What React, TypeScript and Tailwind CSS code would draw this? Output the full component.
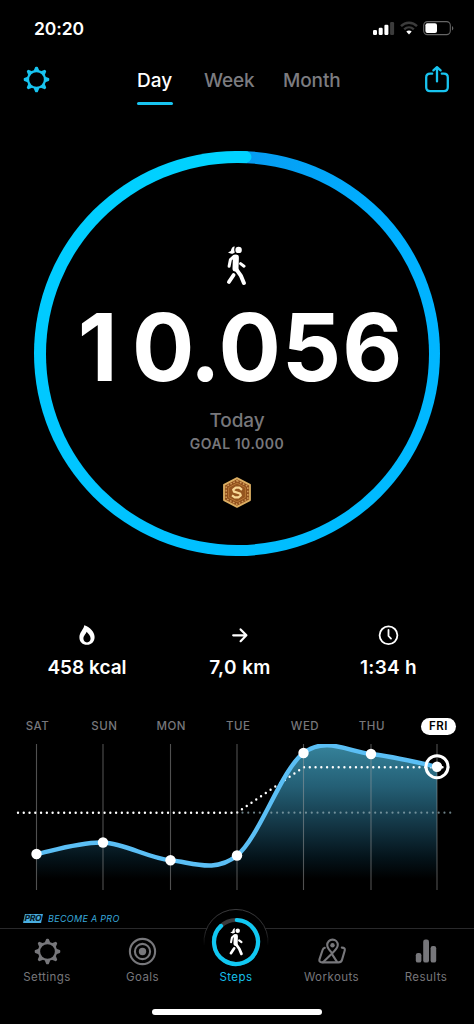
import React from "react";

const TEETH = [0, 45, 90, 135, 180, 225, 270, 315];

function Gear({ className }: { className: string }) {
  return (
    <svg viewBox="-13 -13 26 26" className={className} fill="none">
      <circle r="8.2" stroke="currentColor" strokeWidth="2.2" />
      {TEETH.map((a) => (
        <path
          key={a}
          d="M-1.6 -8.8L-0.5 -11.4H0.5L1.6 -8.8Z"
          transform={`rotate(${a})`}
          fill="currentColor"
          stroke="currentColor"
          strokeWidth="1.8"
          strokeLinejoin="round"
        />
      ))}
    </svg>
  );
}

function Walker({ className }: { className: string }) {
  return (
    <svg viewBox="0 0 20 40" className={className} fill="none" stroke="white" strokeLinecap="round" strokeLinejoin="round">
      <circle cx="12.6" cy="3.9" r="3.2" fill="white" stroke="none" />
      <path d="M8.8 0.4C6.4 0.3 5.4 2.2 4.8 5L2 6.6C4.6 8.2 7.8 8 8.8 6.2C8.1 4.4 8 2.3 8.8 0.4Z" fill="white" stroke="none" />
      <path d="M9.9 11.6L9.5 22.6" strokeWidth="6" />
      <path d="M8 10.4L4.4 13.6L3.1 20.2" strokeWidth="3" />
      <path d="M14.6 17.6L18 20.2" strokeWidth="3" />
      <path d="M10.2 23.2L14.8 29.6L17.9 37" strokeWidth="4" />
      <path d="M7.6 29L2.9 36" strokeWidth="3.8" />
    </svg>
  );
}

function StatusBar() {
  return (
    <div className="flex h-14 items-center justify-between pl-[34px] pr-[19px]">
      <span className="mt-[2px] text-[17.5px] font-semibold leading-none tracking-[-0.1px] text-white">20:20</span>
      <svg width="82" height="16" viewBox="0 0 82 16" fill="none">
        <rect x="0" y="10" width="4" height="5" rx="1.2" fill="white" />
        <rect x="5.7" y="7.7" width="4" height="7.3" rx="1.2" fill="white" />
        <rect x="11.4" y="4.7" width="4" height="10.3" rx="1.2" fill="white" />
        <rect x="17.1" y="2" width="4" height="13" rx="1.2" fill="#3c3c3c" />
        <path d="M28 6.2C32.4 1.6 39.6 1.6 44 6.2" stroke="#3c3c3c" strokeWidth="2.4" />
        <path d="M31.2 9.4C34 6.7 38 6.7 40.8 9.4" stroke="#3c3c3c" strokeWidth="2.3" />
        <path d="M33.3 11.6C34.8 10.2 37.2 10.2 38.7 11.6L36 14.6Z" fill="white" />
        <rect x="50.7" y="1.6" width="26.6" height="13" rx="3.8" stroke="#666" strokeWidth="1.1" />
        <rect x="52.4" y="3.2" width="11.6" height="9.8" rx="2" fill="white" />
        <path d="M79 6V10.4C80.8 9.6 80.8 6.8 79 6Z" fill="#666" />
      </svg>
    </div>
  );
}

function Header() {
  return (
    <header className="flex h-[52px] items-start pl-[23px] pr-[24px] text-[19px] font-medium leading-6">
      <Gear className="mt-[10px] h-[27px] w-[27px] text-[#18c4f0]" />
      <nav className="ml-[87px] flex grow pt-[13px] text-[#7c7c80]">
        <div className="flex w-[67px] flex-col text-white">
          <span>Day</span>
          <span className="mt-[9px] h-[3px] w-[36px] rounded-full bg-[#18c4f0]" />
        </div>
        <span className="w-[79px] tracking-[-0.1px]">Week</span>
        <span className="tracking-[-0.1px]">Month</span>
      </nav>
      <svg width="26" height="29" viewBox="0 0 26 29" className="mt-[9px]" fill="none" stroke="#18c4f0" strokeWidth="2.3" strokeLinecap="round" strokeLinejoin="round">
        <path d="M8.2 8.7H6.2C3.6 8.7 2.2 10.2 2.2 12.6V22.2C2.2 24.8 3.6 26.1 6.2 26.1H19.8C22.4 26.1 23.8 24.8 23.8 22.2V12.6C23.8 10.2 22.4 8.7 19.8 8.7H17.8" />
        <path d="M13 16.4V2.6M9.4 5.4L13 2.2L16.6 5.4" />
      </svg>
    </header>
  );
}

function Medal() {
  return (
    <svg width="30" height="33" viewBox="-15 -16.5 30 33" fill="none">
      <path d="M0 -14.4L13 -7.6V7.6L0 14.4L-13 7.6V-7.6Z" fill="#8f4f1c" stroke="#dcae62" strokeWidth="1.8" strokeLinejoin="round" />
      <path d="M0 -11.8L10.8 -6.2V6.2L0 11.8L-10.8 6.2V-6.2Z" stroke="#d09a5a" strokeWidth="1.5" strokeDasharray="1.7 1.6" strokeLinejoin="round" />
      <path d="M0 -9.4L8.4 -4.9V4.9L0 9.4L-8.4 4.9V-4.9Z" fill="#94541f" stroke="#b97a38" strokeWidth="0.9" strokeLinejoin="round" />
      <path d="M5 -2.6L2.4 -4.8H-1.2L-3.8 -2.9L-3 -0.9L3 1L3.8 3L1.4 4.9H-2.2L-5 2.8" stroke="#f8d795" strokeWidth="2.2" strokeLinejoin="round" />
    </svg>
  );
}

function Ring() {
  return (
    <section className="relative ml-[34px] mt-[43px] h-[405px] w-[406px] shrink-0 rounded-full bg-[conic-gradient(from_3deg,#069cf2_0deg,#00aeff_40deg,#00b6ff_90deg,#00bfff_180deg,#00caff_270deg,#00d3ff_357deg)] p-[11.5px]">
      <div className="flex h-full w-full flex-col items-center rounded-full bg-black">
        <Walker className="mr-[2px] mt-[83px] h-[40px] w-[20px]" />
        <div className="ml-[7px] mt-[17px] flex h-[90px] scale-x-[0.99] items-center whitespace-nowrap text-[93.5px] font-bold leading-none text-white">
          <span className="tracking-[14.5px]">1</span>
          <span className="tracking-[-2px]">0.</span>
          <span className="tracking-[1px]">056</span>
        </div>
        <div className="mt-[16px] text-[19px] font-medium leading-6 tracking-[-0.1px] text-[#77777b]">Today</div>
        <div className="mt-[1.5px] text-[14px] font-semibold leading-5 tracking-[0.5px] text-[#77777b]">GOAL 10.000</div>
        <div className="mt-[21.5px]">
          <Medal />
        </div>
      </div>
      <svg className="absolute left-0 top-0" width="406" height="14" viewBox="0 0 406 14">
        <path d="M202 5.8H203Q208 5.8 211.8 6" stroke="#00d2ff" strokeWidth="11.4" strokeLinecap="round" fill="none" />
      </svg>
    </section>
  );
}

function Stats() {
  return (
    <section className="mt-[67px] flex h-[63px] pl-[10px] pr-[10px] text-[19px] font-semibold leading-6 text-white">
      <div className="flex w-[154px] flex-col items-center">
        <svg width="18" height="22" viewBox="0 0 18 22" className="mt-[1px]">
          <path fillRule="evenodd" fill="white" d="M7 1.4C11.8 3 16.6 7.6 16.6 13C16.6 17.8 13.4 20.8 9 20.8C4.5 20.8 1.4 17.8 1.4 13.2C1.4 8.6 5.4 5.6 6.2 1.8C6.3 1.4 6.6 1.3 7 1.4ZM8.6 7.8C8.2 10 5.4 11.6 5.4 14.6C5.4 17 6.8 18.4 9 18.4C11.2 18.4 12.6 17 12.6 14.6C12.6 11.8 10.2 9.6 8.6 7.8Z" />
        </svg>
        <span className="mt-[10px]">458 kcal</span>
      </div>
      <div className="flex w-[152px] flex-col items-center">
        <svg width="18" height="22" viewBox="0 0 18 22" className="mt-[1px]" fill="none" stroke="white" strokeWidth="2.2" strokeLinecap="round" strokeLinejoin="round">
          <path d="M2.2 11.3H15.2M9.6 5.4L15.4 11.3L9.6 17.2" />
        </svg>
        <span className="mt-[10px] tracking-[0.4px]">7,0 km</span>
      </div>
      <div className="flex w-[145px] flex-col items-center">
        <svg width="22" height="22" viewBox="0 0 22 22" className="mt-[1px]" fill="none" stroke="white" strokeWidth="1.8" strokeLinecap="round" strokeLinejoin="round">
          <circle cx="10.5" cy="11.3" r="8.9" />
          <path d="M10.5 6V12L13 14.6" />
        </svg>
        <span className="mt-[10px] tracking-[0.3px]">1:34 h</span>
      </div>
    </section>
  );
}

const POINTS: [number, number][] = [
  [36.5, 114],
  [103, 102.5],
  [170.5, 120.3],
  [237, 115.5],
  [303.5, 13],
  [371, 14],
  [437, 26.7],
];

const curve = POINTS.slice(1).reduce((d, p, i) => {
  const a = POINTS[i];
  const before = POINTS[i - 1] ?? a;
  const after = POINTS[i + 2] ?? p;
  return `${d}C${a[0] + (p[0] - before[0]) / 6} ${a[1] + (p[1] - before[1]) / 6} ${p[0] - (after[0] - a[0]) / 6} ${p[1] - (after[1] - a[1]) / 6} ${p[0]} ${p[1]}`;
}, `M${POINTS[0][0]} ${POINTS[0][1]}`);

function Chart() {
  return (
    <section className="mt-[29px]">
      <div className="flex h-[22px] items-center pl-[4px] text-[11.5px] font-medium leading-none tracking-[0.5px] text-[#77777b]">
        {["SAT", "SUN", "MON", "TUE", "WED", "THU"].map((d) => (
          <span key={d} className="mt-[2px] w-[66.9px] text-center">
            {d}
          </span>
        ))}
        <span className="ml-[15.6px] flex h-[17px] w-[35px] items-center justify-center rounded-full bg-white pt-[2px] font-semibold tracking-[0.5px] text-black">FRI</span>
      </div>
      <svg width="474" height="155" viewBox="0 0 474 155" fill="none" className="mt-[3px] block">
        <defs>
          <linearGradient id="area" x1="0" y1="4" x2="0" y2="146" gradientUnits="userSpaceOnUse">
            <stop offset="0" stopColor="#36839b" />
            <stop offset="0.3" stopColor="#245f75" />
            <stop offset="0.6" stopColor="#11313f" />
            <stop offset="0.8" stopColor="#04131a" />
            <stop offset="0.95" stopColor="#000000" />
          </linearGradient>
          <clipPath id="plot">
            <rect x="0" y="4" width="474" height="151" />
          </clipPath>
        </defs>
        <g clipPath="url(#plot)">
          <path d={`${curve}V150H36.5Z`} fill="url(#area)" />
          <path d="M18 72.7H237L303.5 27.3H453" stroke="white" strokeWidth="2.4" strokeLinecap="round" strokeDasharray="0 5.77" />
          <path d="M242.5 72.7H455" stroke="#8fa9b2" strokeOpacity="0.75" strokeWidth="2.2" strokeLinecap="round" strokeDasharray="0 5.77" />
          <path d={curve} stroke="#5bbff5" strokeWidth="4.4" />
          {POINTS.map(([x]) => (
            <path key={x} d={`M${x} 4V150`} stroke="#a0a0a0" strokeOpacity="0.5" strokeWidth="1.1" />
          ))}
        </g>
        {POINTS.map(([x, y]) => (
          <circle key={x} cx={x} cy={y} r="5.2" fill="white" />
        ))}
        <circle cx="437" cy="26.7" r="11" stroke="white" strokeWidth="3" />
      </svg>
    </section>
  );
}

function StepsBadge() {
  return (
    <svg width="68" height="68" viewBox="-34 -34 68 68" className="absolute left-0 top-[-21px]" fill="none">
      <defs>
        <linearGradient id="rim" x1="0" y1="-32" x2="0" y2="4" gradientUnits="userSpaceOnUse">
          <stop offset="0" stopColor="#3a3a3c" />
          <stop offset="0.6" stopColor="#2c2c2e" />
          <stop offset="1" stopColor="#000000" />
        </linearGradient>
      </defs>
      <circle r="32" fill="black" />
      <path d="M-31.8 3A32 32 0 1 1 31.8 3" stroke="url(#rim)" strokeWidth="1" />
      <circle r="22" stroke="#3a3a3c" strokeWidth="4.2" />
      <path d="M0.8 -22A22 22 0 1 1 -15 -16.1" stroke="#10c8f2" strokeWidth="4.2" strokeLinecap="round" />
      <g transform="translate(-7.6 -14)">
        <Walker className="h-[28px] w-[15px]" />
      </g>
    </svg>
  );
}

function TabBar() {
  return (
    <footer>
      <div className="flex h-[19px] items-center gap-[5px] pl-[24px] text-[#38a9dc]">
        <span className="flex h-[9px] w-[18px] -skew-x-12 items-center justify-center bg-[#4aaee0] text-[8.5px] font-extrabold leading-none tracking-[-0.3px] text-[#06202c]">PRO</span>
        <span className="ml-[1px] text-[9px] italic leading-none tracking-[0.3px]">BECOME A PRO</span>
      </div>
      <div className="flex h-[60px] border-t border-[#29292b] text-[11.5px] leading-none tracking-[0.45px] text-[#77777b]">
        <div className="flex w-[94px] flex-col items-center pt-[9px]">
          <Gear className="h-[27px] w-[27px]" />
          <span className="mt-[7px]">Settings</span>
        </div>
        <div className="flex w-[97px] flex-col items-center pt-[8px]">
          <svg width="29" height="29" viewBox="-14.5 -14.5 29 29" fill="none" stroke="currentColor">
            <circle r="12.6" strokeWidth="2.1" />
            <circle r="7.6" strokeWidth="2.1" />
            <circle r="3.7" fill="currentColor" stroke="none" />
          </svg>
          <span className="mt-[6px]">Goals</span>
        </div>
        <div className="relative ml-[11px] flex w-[68px] flex-col items-center pt-[43px] text-[#16bfe8]">
          <StepsBadge />
          <span>Steps</span>
        </div>
        <div className="ml-[14px] flex w-[95px] flex-col items-center pt-[8px]">
          <svg width="28" height="29" viewBox="0 0 28 29" fill="none" stroke="currentColor" strokeWidth="2.1" strokeLinecap="round" strokeLinejoin="round">
            <path d="M14.3 16.2C11.2 13.2 9.2 10.8 9.2 8C9.2 5 11.5 2.6 14.5 2.6C17.5 2.6 19.8 5 19.8 8C19.8 10.8 17.4 13.2 14.3 16.2L5 25.2" />
            <circle cx="14.5" cy="8.2" r="2.2" fill="currentColor" stroke="none" />
            <path d="M6.8 10.8C5.6 11.2 5 11.8 4.6 13L1.6 21.8C0.9 24 1.8 25.4 4 25.4H20.6C22.6 25.4 23.4 24.8 24 22.9L26.6 14C27.2 11.8 26.4 10.6 23.8 10.6" />
            <path d="M14 17.2L19 24.8" />
          </svg>
          <span className="mt-[6px]">Workouts</span>
        </div>
        <div className="flex w-[94px] flex-col items-center pt-[8px]">
          <svg width="22" height="29" viewBox="0 0 22 29" fill="currentColor">
            <rect x="0.8" y="16" width="5.6" height="9.6" rx="2.2" />
            <rect x="8.2" y="2.6" width="5.8" height="23" rx="2.2" />
            <rect x="15.6" y="9" width="5.6" height="16.6" rx="2.2" />
          </svg>
          <span className="mt-[6px]">Results</span>
        </div>
      </div>
      <div className="mx-auto mt-[21px] h-[6px] w-[170px] rounded-full bg-white" />
    </footer>
  );
}

export default function App() {
  return (
    <div className="flex h-[1024px] w-[474px] flex-col overflow-hidden bg-black font-['Inter',sans-serif]">
      <StatusBar />
      <Header />
      <Ring />
      <Stats />
      <Chart />
      <div className="mt-[14px]">
        <TabBar />
      </div>
    </div>
  );
}
